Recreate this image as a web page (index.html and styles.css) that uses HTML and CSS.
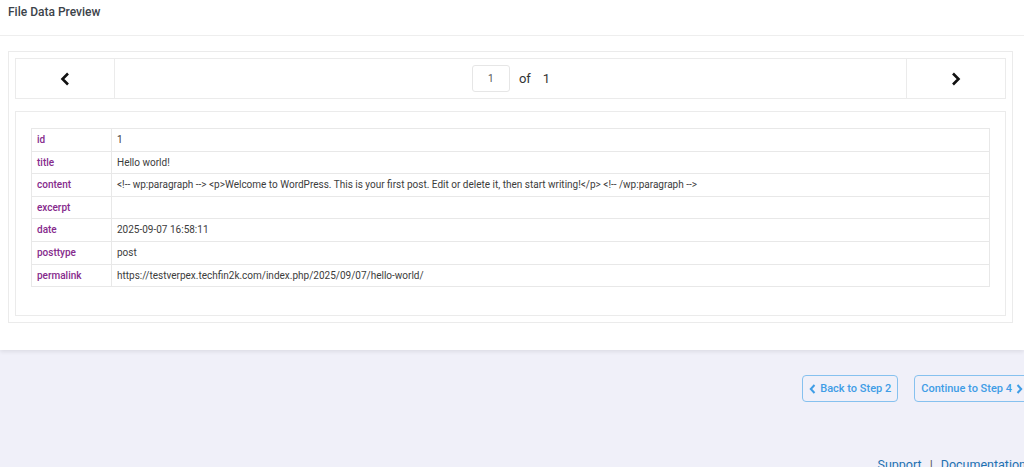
FILE: index.html
```html
<!DOCTYPE html>
<html>
  <head>
    <title>File Data Preview</title>
    <link rel="stylesheet" href="styles.css">
  </head>
  <body>
    <div class="page">
      <div class="panel">
        <h2 class="panel-title">File Data Preview</h2>
        <div class="preview">
          <div class="pager">
            <button class="pager-btn">
              <svg width="10" height="14" viewBox="0 0 10 14"><path d="M8 1.5 2.5 7 8 12.5" fill="none" stroke="#111" stroke-width="2.6"/></svg>
            </button>
            <div class="pager-mid">
              <input class="pager-input" type="text" value="1">
              <span class="pager-of">of</span>
              <span class="pager-total">1</span>
            </div>
            <button class="pager-btn">
              <svg width="10" height="14" viewBox="0 0 10 14"><path d="M2 1.5 7.5 7 2 12.5" fill="none" stroke="#111" stroke-width="2.6"/></svg>
            </button>
          </div>
          <div class="data-box">
            <table class="data-table">
              <tr><th>id</th><td>1</td></tr>
              <tr><th>title</th><td>Hello world!</td></tr>
              <tr><th>content</th><td>&lt;!-- wp:paragraph --&gt; &lt;p&gt;Welcome to WordPress. This is your first post. Edit or delete it, then start writing!&lt;/p&gt; &lt;!-- /wp:paragraph --&gt;</td></tr>
              <tr><th>excerpt</th><td></td></tr>
              <tr><th>date</th><td>2025-09-07 16:58:11</td></tr>
              <tr><th>posttype</th><td>post</td></tr>
              <tr><th>permalink</th><td>https://testverpex.techfin2k.com/index.php/2025/09/07/hello-world/</td></tr>
            </table>
          </div>
        </div>
      </div>

      <div class="steps">
        <button class="step-btn">
          <svg width="7" height="10" viewBox="0 0 7 10"><path d="M5.5 1 1.8 5l3.7 4" fill="none" stroke="currentColor" stroke-width="2"/></svg>
          Back to Step 2
        </button>
        <button class="step-btn">
          Continue to Step 4
          <svg width="7" height="10" viewBox="0 0 7 10"><path d="M1.5 1l3.7 4-3.7 4" fill="none" stroke="currentColor" stroke-width="2"/></svg>
        </button>
      </div>

      <div class="footer-links">
        <a href="#">Support</a>
        <span class="sep">|</span>
        <a href="#">Documentation</a>
      </div>
    </div>
  </body>
</html>
```

FILE: styles.css
```css
html, body {
  margin: 0;
  padding: 0;
  overflow: hidden;
}

body {
  font-family: Roboto, "Liberation Sans", sans-serif;
  background: #f0f0f9;
  color: #333;
}

.page {
  width: 1024px;
  height: 467px;
  overflow: hidden;
}

.panel {
  background: white;
  height: 350px;
  box-sizing: border-box;
  box-shadow: 0 2px 4px rgba(0, 0, 0, 0.08);
  padding-top: 1px;
}

.panel-title {
  margin: 0;
  padding: 4px 8px 0;
  height: 30px;
  font-size: 12px;
  font-weight: 500;
  color: #3c434a;
  border-bottom: 1px solid #eeeeee;
}

.preview {
  margin: 15px 11px 0 8px;
  border: 1px solid #ebebeb;
  padding: 6px 6px 6px;
}

.pager {
  display: flex;
  height: 39px;
  border: 1px solid #ebebeb;
}

.pager-btn {
  width: 99px;
  border: none;
  background: white;
  display: flex;
  align-items: center;
  justify-content: center;
  padding: 0;
  cursor: pointer;
}

.pager-btn:first-child {
  border-right: 1px solid #ebebeb;
}

.pager-btn:last-child {
  border-left: 1px solid #ebebeb;
}

.pager-mid {
  flex: 1;
  display: flex;
  align-items: center;
  justify-content: center;
  gap: 9px;
  padding-left: 1px;
}

.pager-input {
  width: 38px;
  height: 27px;
  box-sizing: border-box;
  border: 1px solid #e6e6e6;
  border-radius: 3px;
  text-align: center;
  font-family: Roboto, sans-serif;
  font-size: 10px;
  color: #555;
  padding: 0;
}

.pager-of,
.pager-total {
  font-size: 13px;
  color: #333;
}

.pager-total {
  margin-left: 3px;
}

.data-box {
  margin-top: 12px;
  border: 1px solid #ebebeb;
  padding: 16px 15px 28px;
}

.data-table {
  width: 100%;
  border-collapse: collapse;
  font-size: 10px;
}

.data-table th,
.data-table td {
  border: 1px solid #e8e8e8;
  padding: 4px 5px;
  height: 13.6px;
  line-height: 13.6px;
  box-sizing: content-box;
  text-align: left;
}

.data-table th {
  width: 69px;
  font-weight: 500;
  color: #862a8c;
}

.data-table td {
  color: #3c3c3c;
}

.steps {
  display: flex;
  justify-content: flex-end;
  gap: 16px;
  margin-top: 25px;
  margin-right: -6px;
}

.step-btn {
  display: flex;
  align-items: center;
  gap: 4px;
  height: 27px;
  padding: 0 6px;
  border: 1px solid #86c1ef;
  border-radius: 4px;
  background: transparent;
  color: #3f9de6;
  font-family: Roboto, sans-serif;
  font-size: 11px;
  font-weight: 500;
  cursor: pointer;
  white-space: nowrap;
}

.footer-links {
  display: flex;
  justify-content: flex-end;
  align-items: center;
  gap: 8px;
  margin-top: 55px;
  margin-right: -2px;
  font-size: 12.5px;
}

.footer-links a {
  color: #2271b1;
  text-decoration: none;
}

.sep {
  color: #555;
}
```
